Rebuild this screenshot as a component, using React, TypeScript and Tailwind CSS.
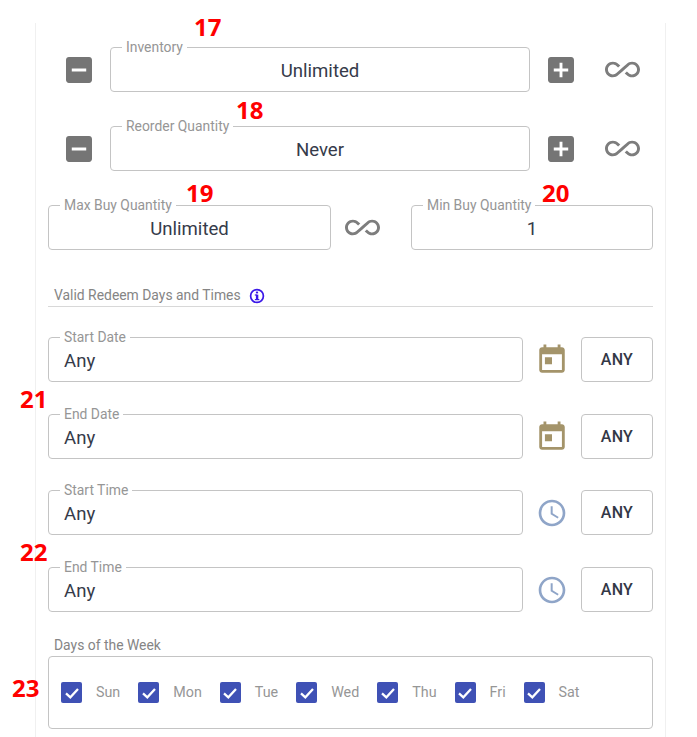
import React from 'react';

const labelFont = "font-['Roboto',sans-serif]";

const Num = ({ className, children }: { className: string; children: React.ReactNode }) => (
  <span className={`absolute font-['Open_Sans',sans-serif] font-bold text-[24px] leading-none text-[#ff0000] ${className}`}>
    {children}
  </span>
);

const InfinityIcon = () => (
  <svg width="35" height="35" viewBox="0 0 24 24" fill="#7d7d7d" className="shrink-0">
    <path d="M18.6 6.62c-1.44 0-2.8.56-3.77 1.53L12 10.66 10.48 12h.01L7.8 14.39c-.64.64-1.49.99-2.4.99-1.87 0-3.39-1.51-3.39-3.38S3.53 8.62 5.4 8.62c.91 0 1.76.35 2.44 1.03l1.13 1 1.51-1.34L9.22 8.2C8.2 7.18 6.84 6.62 5.4 6.62 2.42 6.62 0 9.04 0 12s2.42 5.38 5.4 5.38c1.44 0 2.8-.56 3.77-1.53l2.83-2.5.01.01L13.52 12h-.01l2.69-2.39c.64-.64 1.49-.99 2.4-.99 1.87 0 3.39 1.51 3.39 3.38s-1.52 3.38-3.39 3.38c-.9 0-1.76-.35-2.44-1.03l-1.14-1.01-1.51 1.34 1.27 1.12c1.02 1.01 2.37 1.57 3.82 1.57 2.98 0 5.4-2.41 5.4-5.38s-2.42-5.37-5.4-5.37z" />
  </svg>
);

const MinusBox = () => (
  <svg width="26" height="26" viewBox="3 3 18 18" fill="#757575" className="shrink-0">
    <path d="M19 3H5c-1.1 0-2 .9-2 2v14c0 1.1.9 2 2 2h14c1.1 0 2-.9 2-2V5c0-1.1-.9-2-2-2zm-2 10H7v-2h10v2z" />
  </svg>
);

const PlusBox = () => (
  <svg width="26" height="26" viewBox="3 3 18 18" fill="#757575" className="shrink-0">
    <path d="M19 3H5c-1.11 0-2 .9-2 2v14c0 1.1.89 2 2 2h14c1.1 0 2-.9 2-2V5c0-1.1-.9-2-2-2zm-2 10h-4v4h-2v-4H7v-2h4V7h2v4h4v2z" />
  </svg>
);

const CalendarIcon = () => (
  <svg width="34" height="34" viewBox="0 0 24 24" fill="#a4946a" className="shrink-0">
    <path d="M19 3h-1V1h-2v2H8V1H6v2H5c-1.11 0-1.99.9-1.99 2L3 19c0 1.1.89 2 2 2h14c1.1 0 2-.9 2-2V5c0-1.1-.9-2-2-2zm0 16H5V8h14v11zM7 10h5v5H7z" />
  </svg>
);

const ClockIcon = () => (
  <svg width="32" height="32" viewBox="0 0 24 24" fill="#8fa5c8" className="shrink-0">
    <path d="M11.99 2C6.47 2 2 6.48 2 12s4.47 10 9.99 10C17.52 22 22 17.52 22 12S17.52 2 11.99 2zM12 20c-4.42 0-8-3.58-8-8s3.58-8 8-8 8 3.58 8 8-3.58 8-8 8zm.5-13H11v6l5.25 3.15.75-1.23-4.5-2.67z" />
  </svg>
);

const InfoIcon = () => (
  <svg width="16" height="16" viewBox="0 0 16 16" fill="none" className="shrink-0">
    <circle cx="8" cy="8" r="6.4" stroke="#3a17e8" strokeWidth="1.7" />
    <rect x="6.9" y="6.6" width="2.4" height="5.4" fill="#3a17e8" />
    <rect x="5.8" y="6.4" width="2" height="1.2" fill="#3a17e8" />
    <rect x="5.9" y="11" width="4.4" height="1.2" fill="#3a17e8" />
    <rect x="6.9" y="3.6" width="2.2" height="1.8" fill="#3a17e8" />
  </svg>
);

const Field = ({ label, value, center, className }: { label: string; value: string; center?: boolean; className: string }) => (
  <div className={`relative h-[45px] shrink-0 rounded border border-[#c4c4c4] flex items-center px-[15px] ${className}`}>
    <span className="absolute left-[11px] top-[-10px] bg-white px-[4px] text-[13.9px] leading-[18px] text-[#969696]">{label}</span>
    <span className={`w-full text-[18.6px] leading-none pt-[3px] text-[#363b4a] ${center ? 'text-center' : ''}`}>{value}</span>
  </div>
);

const StepperRow = ({ label, value, className }: { label: string; value: string; className: string }) => (
  <div className={`flex items-center pl-[18px] ${className}`}>
    <MinusBox />
    <Field label={label} value={value} center className="w-[420px] ml-[18px]" />
    <div className="ml-[18px]"><PlusBox /></div>
    <div className="ml-[31px]"><InfinityIcon /></div>
  </div>
);

const DateRow = ({ label, icon, className }: { label: string; icon: React.ReactNode; className: string }) => (
  <div className={`flex items-center ${className}`}>
    <Field label={label} value="Any" className="w-[475px]" />
    <div className="w-[58px] flex justify-center">{icon}</div>
    <button className="w-[72px] h-[45px] rounded border border-[#c4c4c4] text-[16px] tracking-[0.3px] font-medium text-[#333846]">ANY</button>
  </div>
);

const days = ['Sun', 'Mon', 'Tue', 'Wed', 'Thu', 'Fri', 'Sat'];

const DayCheck = ({ day }: { day: string }) => (
  <div className="flex items-center">
    <span className="w-[21px] h-[21px] rounded-[2px] bg-[#3f51b5] flex items-center justify-center">
      <svg width="16" height="16" viewBox="0 0 24 24" fill="none" stroke="#fff" strokeWidth="3.4">
        <path d="M3 12.5 9.5 18.5 21 6" />
      </svg>
    </span>
    <span className="ml-[14px] text-[14.3px] text-[#969696]">{day}</span>
  </div>
);

export default function App() {
  return (
    <div className={`relative w-[697px] h-[737px] overflow-hidden bg-white ${labelFont}`}>
      <div className="absolute left-0 top-0 w-full h-[23px]" />
      <div className="ml-[35px] mt-[23px] w-[631px] h-[714px] border-x border-[#f0f0f0] pl-[12px] pr-[12px] pt-[24px]">
        <StepperRow label="Inventory" value="Unlimited" className="" />
        <StepperRow label="Reorder Quantity" value="Never" className="mt-[34px]" />
        <div className="flex items-center mt-[34px]">
          <Field label="Max Buy Quantity" value="Unlimited" center className="w-[283px]" />
          <div className="ml-[14px]"><InfinityIcon /></div>
          <Field label="Min Buy Quantity" value="1" center className="w-[242px] ml-[31px]" />
        </div>
        <div className="mt-[36px] h-[21px] pl-[6px] flex items-center border-b border-[#d8d8d8] pb-[1px] text-[13.9px] text-[#858585]">
          Valid Redeem Days and Times
          <span className="ml-[8px]"><InfoIcon /></span>
        </div>
        <DateRow label="Start Date" icon={<CalendarIcon />} className="mt-[30px]" />
        <DateRow label="End Date" icon={<CalendarIcon />} className="mt-[32px]" />
        <DateRow label="Start Time" icon={<ClockIcon />} className="mt-[31px]" />
        <DateRow label="End Time" icon={<ClockIcon />} className="mt-[32px]" />
        <div className="mt-[24px] pl-[6px] text-[13.9px] leading-[18px] text-[#858585]">Days of the Week</div>
        <div className="mt-[2px] h-[73px] rounded border border-[#c4c4c4] flex items-center pl-[12px] gap-[18px]">
          {days.map((d) => <DayCheck key={d} day={d} />)}
        </div>
      </div>
      <Num className="left-[194px] top-[15px]">17</Num>
      <Num className="left-[236px] top-[98px]">18</Num>
      <Num className="left-[186px] top-[181px]">19</Num>
      <Num className="left-[542px] top-[181px]">20</Num>
      <Num className="left-[20px] top-[387px]">21</Num>
      <Num className="left-[20px] top-[540px]">22</Num>
      <Num className="left-[12px] top-[676px]">23</Num>
    </div>
  );
}
